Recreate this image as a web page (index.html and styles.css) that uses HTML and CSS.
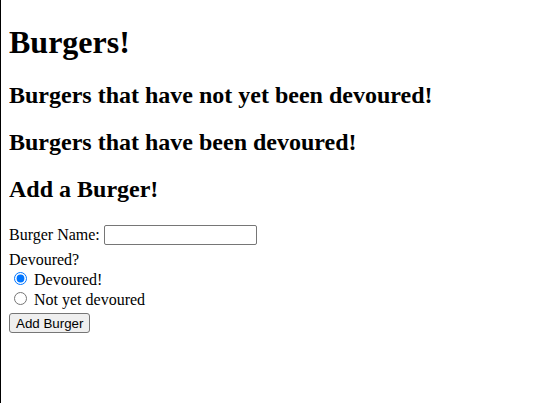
FILE: index.html
```html
<!DOCTYPE html>
<html>
<head>
<meta charset="utf-8">
<link rel="stylesheet" href="styles.css">
</head>
<body>
<h1 class="title">Burgers!</h1>
<h2>Burgers that have not yet been devoured!</h2>
<h2>Burgers that have been devoured!</h2>
<h2>Add a Burger!</h2>
<form class="burger-form">
  <label for="bn">Burger Name:</label> <input type="text" id="bn" class="text-input"><br>
  <span>Devoured?</span><br>
  <input type="radio" name="dev" id="d1" class="radio" checked> <label for="d1">Devoured!</label><br>
  <input type="radio" name="dev" id="d2" class="radio"> <label for="d2">Not yet devoured</label><br>
  <button type="button" class="btn">Add Burger</button>
</form>
</body>
</html>
```
FILE: styles.css
```css
html {
  min-height: 100%;
  box-sizing: border-box;
  border-left: 1px solid #000;
}
body {
  font-family: "Liberation Serif", "Times New Roman", serif;
  font-size: 16px;
  color: #000;
}
.title {
  margin-top: 16px;
}
.text-input {
  box-sizing: border-box;
  width: 153px;
  height: 20px;
  margin: 2px 0 6px;
  border: 1px solid #767676;
  border-radius: 2px;
  padding: 1px 2px;
  vertical-align: baseline;
}
.radio {
  margin: 3px 3px 0 5px;
}
.btn {
  box-sizing: border-box;
  height: 20px;
  margin-top: 4px;
  font-family: "Liberation Sans", Arial, sans-serif;
  font-size: 13.33px;
  padding: 1px 6px;
  border: 1px solid #767676;
  border-radius: 3px;
  background: #efefef;
  color: #000;
}
```
